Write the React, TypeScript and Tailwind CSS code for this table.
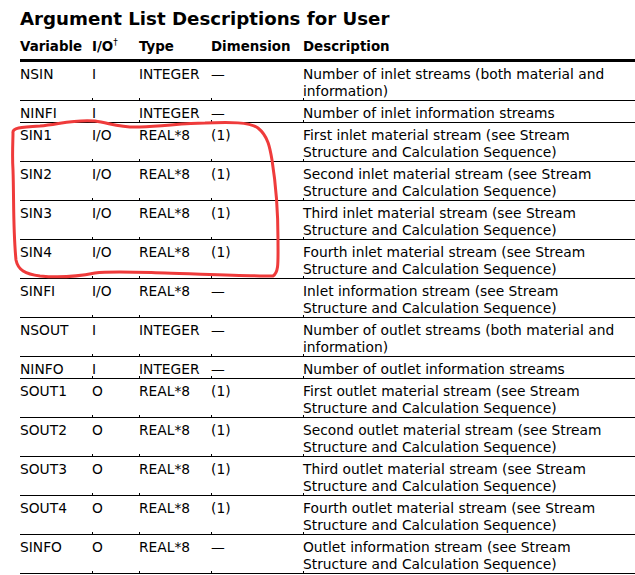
import React from "react";

type Row = { name: string; io: string; type: string; dim: string; desc: string[] };

const rows: Row[] = [
  { name: "NSIN", io: "I", type: "INTEGER", dim: "—", desc: ["Number of inlet streams (both material and", "information)"] },
  { name: "NINFI", io: "I", type: "INTEGER", dim: "—", desc: ["Number of inlet information streams"] },
  { name: "SIN1", io: "I/O", type: "REAL*8", dim: "(1)", desc: ["First inlet material stream (see Stream", "Structure and Calculation Sequence)"] },
  { name: "SIN2", io: "I/O", type: "REAL*8", dim: "(1)", desc: ["Second inlet material stream (see Stream", "Structure and Calculation Sequence)"] },
  { name: "SIN3", io: "I/O", type: "REAL*8", dim: "(1)", desc: ["Third inlet material stream (see Stream", "Structure and Calculation Sequence)"] },
  { name: "SIN4", io: "I/O", type: "REAL*8", dim: "(1)", desc: ["Fourth inlet material stream (see Stream", "Structure and Calculation Sequence)"] },
  { name: "SINFI", io: "I/O", type: "REAL*8", dim: "—", desc: ["Inlet information stream (see Stream", "Structure and Calculation Sequence)"] },
  { name: "NSOUT", io: "I", type: "INTEGER", dim: "—", desc: ["Number of outlet streams (both material and", "information)"] },
  { name: "NINFO", io: "I", type: "INTEGER", dim: "—", desc: ["Number of outlet information streams"] },
  { name: "SOUT1", io: "O", type: "REAL*8", dim: "(1)", desc: ["First outlet material stream (see Stream", "Structure and Calculation Sequence)"] },
  { name: "SOUT2", io: "O", type: "REAL*8", dim: "(1)", desc: ["Second outlet material stream (see Stream", "Structure and Calculation Sequence)"] },
  { name: "SOUT3", io: "O", type: "REAL*8", dim: "(1)", desc: ["Third outlet material stream (see Stream", "Structure and Calculation Sequence)"] },
  { name: "SOUT4", io: "O", type: "REAL*8", dim: "(1)", desc: ["Fourth outlet material stream (see Stream", "Structure and Calculation Sequence)"] },
  { name: "SINFO", io: "O", type: "REAL*8", dim: "—", desc: ["Outlet information stream (see Stream", "Structure and Calculation Sequence)"] },
];

const cols = "grid grid-cols-[72px_47px_72px_92px_323px]";

// tiny tick left by the cell borders just above each rule
function Tick() {
  return <span className="absolute left-0 bottom-0 w-px h-[2px] bg-black" />;
}

export default function App() {
  return (
    <div className="relative w-[635px] h-[575px] overflow-hidden bg-white text-black font-['DejaVu_Sans',sans-serif]">
      <div className="pl-5 pt-[7px]">
        <h2 className="text-[18.2px] leading-[24px] font-bold">Argument List Descriptions for User</h2>

        <div className={`${cols} mt-[7px] pb-[4px] border-b-[3px] border-black text-[13.4px] leading-[17px] font-bold`}>
          <div>Variable</div>
          <div>
            I/O<span className="relative -top-[6px] text-[9px] leading-none font-normal">†</span>
          </div>
          <div>Type</div>
          <div>Dimension</div>
          <div>Description</div>
        </div>

        {rows.map((r) => (
          <div key={r.name} className={`${cols} pt-[4px] border-b border-black text-[13.8px] leading-[17px] whitespace-nowrap`}>
            <div>{r.name}</div>
            <div className="relative">
              <Tick />
              {r.io}
            </div>
            <div className="relative">
              <Tick />
              {r.type}
            </div>
            <div className="relative">
              <Tick />
              {r.dim}
            </div>
            <div className="relative">
              <Tick />
              {r.desc.map((d) => (
                <div key={d}>{d}</div>
              ))}
            </div>
          </div>
        ))}
      </div>

      {/* red hand-drawn marker around SIN1..SIN4 */}
      <svg className="absolute left-0 top-0 pointer-events-none" width="635" height="575">
        <path
          d="M13 133 C 12 128, 20 127, 40 126 C 60 124, 75 119, 95 121 C 110 123, 120 128, 140 127 C 165 126, 185 123, 205 123 C 230 122, 250 122, 258 128 C 268 136, 270 148, 272 160 C 276 185, 278 215, 278 240 C 278 262, 279 272, 273 276 C 250 276, 200 274, 165 273 C 130 272, 110 271, 95 273 C 80 276, 60 278, 40 276 C 25 274, 18 270, 16 260 C 13 230, 14 200, 13 170 C 12 155, 13 140, 13 133 Z"
          fill="none"
          stroke="#ef3b3b"
          strokeWidth="3"
          strokeLinejoin="round"
        />
      </svg>
    </div>
  );
}
